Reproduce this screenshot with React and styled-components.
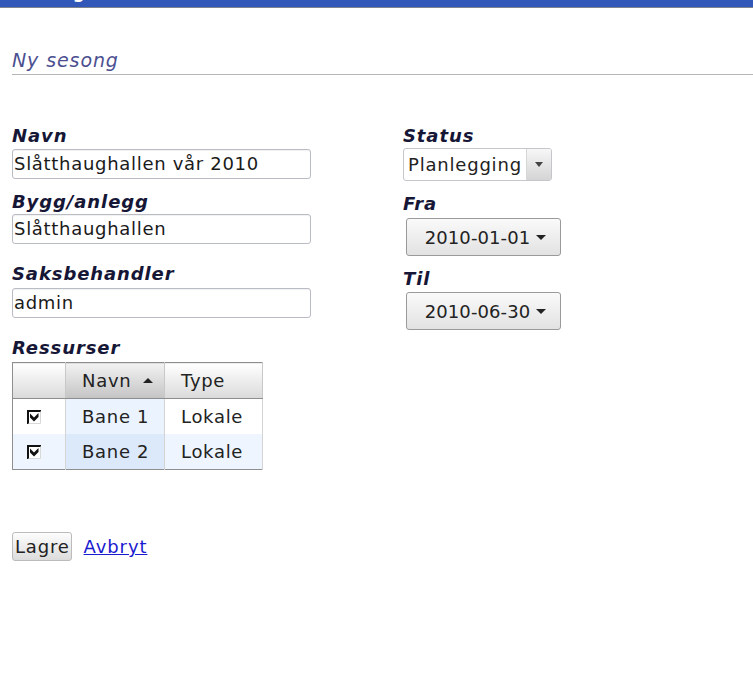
import React from "react";
import styled, { createGlobalStyle } from "styled-components";

const Global = createGlobalStyle`
  html, body { margin: 0; padding: 0; background: #fff; }
  body { font-family: "DejaVu Sans", "Liberation Sans", sans-serif; color: #222; }
`;

const TopBar = styled.div`
  height: 7px;
  background: #3158b8;
  border-bottom: 1px solid #7d828c;
  overflow: hidden;
  position: relative;
`;

const TopTitle = styled.span`
  position: absolute;
  left: 15px;
  top: -16px;
  color: #fff;
  font-weight: bold;
  font-size: 17px;
  line-height: 17px;
`;

const Page = styled.div`
  padding: 0 0 0 12px;
`;

const Heading = styled.h1`
  margin: 40px 0 0 0;
  font-size: 19px;
  letter-spacing: 0.9px;
  font-weight: normal;
  font-style: italic;
  color: #4b4f90;
  line-height: 24px;
  padding-bottom: 2px;
  border-bottom: 1px solid #b5b5b5;
`;

const Form = styled.div`
  display: grid;
  grid-template-columns: 391px 1fr;
  margin-top: 51px;
`;

const Column = styled.div`
  display: flex;
  flex-direction: column;
  align-items: flex-start;
`;

const Label = styled.div`
  font-weight: bold;
  font-style: italic;
  font-size: 18px;
  letter-spacing: 0.9px;
  line-height: 20px;
  color: #161636;
  margin-top: ${(p) => p.$mt || 0}px;
`;

const TextInput = styled.div`
  box-sizing: border-box;
  width: 299px;
  height: 30px;
  margin-top: ${(p) => p.$mt || 3}px;
  border: 1px solid #b9bcc4;
  border-radius: 3px;
  box-shadow: inset 0 1px 1px rgba(0,0,0,0.06);
  font-size: 18px;
  letter-spacing: 0.7px;
  line-height: 28px;
  padding-left: 1px;
  color: #1a1a1a;
  background: #fff;
`;

const Table = styled.table`
  margin-top: 4px;
  border-collapse: collapse;
  table-layout: fixed;
  border: 1px solid #8e8e8e;
  font-size: 18px;
  letter-spacing: 0.7px;
  color: #222;
  width: 251px;
`;

const Col = styled.col`
  width: ${(p) => p.$w}px;
`;

const Th = styled.th`
  height: 35px;
  padding: 0 0 0 16px;
  font-weight: normal;
  text-align: left;
  white-space: nowrap;
  background: ${(p) =>
    p.$sorted
      ? "linear-gradient(#f2f2f2, #c4c4c4)"
      : "linear-gradient(#ffffff, #dadada)"};
  border-right: 1px solid #c8c8c8;
  border-bottom: 1px solid #8e8e8e;
`;

const SortArrow = styled.span`
  display: inline-block;
  width: 0;
  height: 0;
  border-left: 5px solid transparent;
  border-right: 5px solid transparent;
  border-bottom: 5px solid #222;
  margin-left: 12px;
  vertical-align: 4px;
`;

const Tr = styled.tr`
  background: ${(p) => (p.$alt ? "#eef5fe" : "#fff")};
`;

const Td = styled.td`
  height: 35px;
  padding: 0 0 0 ${(p) => (p.$check ? 14 : 16)}px;
  text-align: left;
  white-space: nowrap;
  border-right: 1px solid #d4d4d4;
  background: ${(p) => (p.$sorted ? (p.$alt ? "#dce9fb" : "#eaf3fe") : "transparent")};
`;

const CheckBox = styled.svg`
  display: block;
  width: 14px;
  height: 14px;
`;

const Check = () => (
  <CheckBox viewBox="0 0 14 14">
    <rect x="0" y="0" width="14" height="14" fill="#fff" />
    <path d="M1 14V1H14" stroke="#111" strokeWidth="2" fill="none" />
    <path d="M13.5 1.5V13.5H1.5" stroke="#d8d8d8" strokeWidth="1" fill="none" />
    <path d="M3 3.5 L7 7.5 L11.5 3 L11.5 7 L7 11.5 L3 7.5Z" fill="#111" />
  </CheckBox>
);

const Select = styled.div`
  box-sizing: border-box;
  width: 149px;
  height: 33px;
  margin-top: 2px;
  display: flex;
  border: 1px solid #c4c6cc;
  border-radius: 3px;
  background: #fff;
  font-size: 18px;
  letter-spacing: 0.8px;
  overflow: hidden;
`;

const SelectText = styled.div`
  flex: 1;
  line-height: 31px;
  padding-left: 4px;
  color: #222;
`;

const SelectArrow = styled.div`
  width: 24px;
  border-left: 1px solid #d6d6d6;
  background: linear-gradient(#f7f7f7, #d4d4d4);
  display: flex;
  align-items: center;
  justify-content: center;
  &::after {
    content: "";
    border-left: 4px solid transparent;
    border-right: 4px solid transparent;
    border-top: 5px solid #444;
  }
`;

const DateButton = styled.div`
  box-sizing: border-box;
  width: 155px;
  height: 38px;
  margin: ${(p) => p.$mt || 4}px 0 0 3px;
  border: 1px solid #9a9a9a;
  border-radius: 3px;
  background: linear-gradient(#fafafa, #e2e2e2);
  display: flex;
  align-items: center;
  justify-content: center;
  gap: 6px;
  padding-left: 4px;
  font-size: 18px;
  letter-spacing: 0.1px;
  color: #222;
  &::after {
    content: "";
    border-left: 5px solid transparent;
    border-right: 5px solid transparent;
    border-top: 5px solid #222;
  }
`;

const Actions = styled.div`
  display: flex;
  align-items: center;
  gap: 12px;
  margin-top: 62px;
`;

const Button = styled.button`
  box-sizing: border-box;
  height: 29px;
  padding: 0 1px 0 2px;
  border: 1px solid #bbb;
  border-radius: 3px;
  background: linear-gradient(#fdfdfd, #dcdcdc);
  font-family: "DejaVu Sans", sans-serif;
  font-size: 18px;
  letter-spacing: 0.8px;
  color: #222;
`;

const Link = styled.a`
  color: #1a1ad0;
  font-size: 18px;
  letter-spacing: 0.9px;
  text-decoration: underline;
`;

export default function App() {
  return (
    <>
      <Global />
      <TopBar>
        <TopTitle>Sesonger</TopTitle>
      </TopBar>
      <Page>
        <Heading>Ny sesong</Heading>
        <Form>
          <Column>
            <Label>Navn</Label>
            <TextInput>Slåtthaughallen vår 2010</TextInput>
            <Label $mt={13}>Bygg/anlegg</Label>
            <TextInput $mt={2}>Slåtthaughallen</TextInput>
            <Label $mt={20}>Saksbehandler</Label>
            <TextInput $mt={4}>admin</TextInput>
            <Label $mt={20}>Ressurser</Label>
            <Table>
              <colgroup>
                <Col $w={53} />
                <Col $w={99} />
                <Col $w={98} />
              </colgroup>
              <thead>
                <tr>
                  <Th></Th>
                  <Th $sorted>
                    Navn<SortArrow />
                  </Th>
                  <Th>Type</Th>
                </tr>
              </thead>
              <tbody>
                <Tr>
                  <Td $check><Check /></Td>
                  <Td $sorted>Bane 1</Td>
                  <Td>Lokale</Td>
                </Tr>
                <Tr $alt>
                  <Td $check><Check /></Td>
                  <Td $sorted $alt>Bane 2</Td>
                  <Td>Lokale</Td>
                </Tr>
              </tbody>
            </Table>
            <Actions>
              <Button>Lagre</Button>
              <Link href="#">Avbryt</Link>
            </Actions>
          </Column>
          <Column>
            <Label>Status</Label>
            <Select>
              <SelectText>Planlegging</SelectText>
              <SelectArrow />
            </Select>
            <Label $mt={13}>Fra</Label>
            <DateButton>2010-01-01</DateButton>
            <Label $mt={13}>Til</Label>
            <DateButton $mt={3}>2010-06-30</DateButton>
          </Column>
        </Form>
      </Page>
    </>
  );
}
